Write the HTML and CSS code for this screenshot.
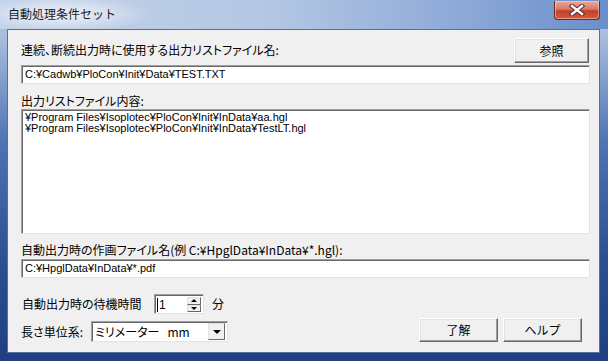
FILE: index.html
```html
<!DOCTYPE html>
<html>
<head lang="ja">
    <meta charset="UTF-8">
    <title>自動処理条件セット</title>
    <link rel="stylesheet" href="styles.css">
</head>
<body>
    <div class="window">
        <div class="titlebar">
            <span class="title">自動処理条件セット</span>
            <div class="close">
                <svg width="16" height="12" viewBox="0 0 16 12">
                    <path d="M3 2 L13 10 M13 2 L3 10" stroke="#5a2a22" stroke-width="4.4" stroke-linecap="square"/>
                    <path d="M3 2 L13 10 M13 2 L3 10" stroke="#fff" stroke-width="2.4" stroke-linecap="square"/>
                </svg>
            </div>
        </div>
        <div class="frame">
            <div class="client">
                <div class="row-top">
                    <span class="lbl lbl-main">連続、断続出力時に使用する出力リストファイル名:</span>
                    <button class="btn btn-browse">参照</button>
                </div>
                <div class="field">C:¥Cadwb¥PloCon¥Init¥Data¥TEST.TXT</div>
                <div class="lbl lbl-block">出力リストファイル内容:</div>
                <div class="field memo">
                    <div>¥Program Files¥Isoplotec¥PloCon¥Init¥InData¥aa.hgl</div>
                    <div>¥Program Files¥Isoplotec¥PloCon¥Init¥InData¥TestLT.hgl</div>
                </div>
                <div class="lbl lbl-block lbl-plot">自動出力時の作画ファイル名(例 C:¥HpglData¥InData¥*.hgl):</div>
                <div class="field">C:¥HpglData¥InData¥*.pdf</div>
                <div class="bottom">
                    <div class="settings">
                        <div class="set-row">
                            <span class="lbl lbl-wait">自動出力時の待機時間</span>
                            <div class="spin">
                                <div class="spin-edit"><span class="caret"></span>1</div>
                                <div class="spin-btns">
                                    <div class="spin-btn"><span class="tri-up"></span></div>
                                    <div class="spin-btn"><span class="tri-down"></span></div>
                                </div>
                            </div>
                            <span class="lbl lbl-min">分</span>
                        </div>
                        <div class="set-row set-unit">
                            <span class="lbl lbl-unit">長さ単位系:</span>
                            <div class="combo">
                                <span class="combo-text">ミリメーター&nbsp;&nbsp;&nbsp;mm</span>
                                <div class="combo-btn"><span class="tri-down"></span></div>
                            </div>
                        </div>
                    </div>
                    <div class="actions">
                        <button class="btn btn-act">了解</button>
                        <button class="btn btn-act">ヘルプ</button>
                    </div>
                </div>
            </div>
        </div>
    </div>
</body>
</html>
```

FILE: styles.css
```css
* {
    margin: 0;
    padding: 0;
    box-sizing: border-box;
}
html,body{
    width:608px;
    height:361px;
    overflow:hidden;
    background:#24468a;
}
.window{
    width:608px;
    height:361px;
    display:flex;
    flex-direction:column;
    background:linear-gradient(to bottom,#b9cae2 0,#a5bbdc 40px,#4f75b5 140px,#2c4f92 260px,#1f3f80 100%);
    font-family:"Noto Sans CJK JP","Liberation Sans",sans-serif;
    color:#000;
}
.titlebar{
    height:29px;
    display:flex;
    justify-content:space-between;
    align-items:flex-start;
    padding-left:8px;
    background:
        radial-gradient(ellipse 90px 18px at 62px 14px,rgba(255,255,255,.75),rgba(255,255,255,0)),
        linear-gradient(to right,#c3d2e8 0,#b3c7e4 45%,#8eaad8 75%,#6a8fcb 100%);
}
.title{
    font-size:12px;
    line-height:14px;
    padding-top:7px;
    color:#1a1a1a;
}
.close{
    width:46px;
    height:19px;
    margin:1px 8px 0 0;
    border:1px solid #6b2b22;
    border-top:none;
    border-radius:0 0 4px 4px;
    background:linear-gradient(to bottom,#e9a999 0,#d77a66 45%,#c2412a 55%,#d45a3f 100%);
    box-shadow:inset 0 0 0 1px rgba(255,220,210,.5);
    display:flex;
    align-items:center;
    justify-content:center;
}
.frame{
    flex:1;
    padding:0 8px 8px 7px;
    display:flex;
}
.client{
    flex:1;
    background:#f0f0f0;
    border:1px solid #55709c;
    padding:8px 9px 10px 13px;
    display:flex;
    flex-direction:column;
}
.lbl{
    font-size:12px;
    line-height:14px;
    font-feature-settings:"palt";
    white-space:nowrap;
}
.row-top{
    height:25px;
    display:flex;
    justify-content:space-between;
}
.lbl-main{
    align-self:flex-end;
    padding-bottom:6px;
}
.btn{
    font-family:"Noto Sans CJK JP","Liberation Sans",sans-serif;
    font-size:12px;
    line-height:14px;
    color:#000;
    background:#f0f0f0;
    border:1px solid;
    border-color:#fff #696969 #696969 #fff;
    box-shadow:inset -1px -1px 0 #a0a0a0,inset 1px 1px 0 #e3e3e3;
}
.btn-browse{
    width:75px;
    height:25px;
    margin-right:1px;
}
.field{
    height:19px;
    margin-top:2px;
    background:#fff;
    border:1px solid;
    border-color:#a0a0a0 #e3e3e3 #e3e3e3 #a0a0a0;
    box-shadow:inset 1px 1px 0 #696969;
    padding:0 3px;
    font-family:"Liberation Sans","Noto Sans CJK JP",sans-serif;
    font-size:11px;
    line-height:17px;
    white-space:nowrap;
}
.lbl-block{
    margin-top:10px;
}
.field.memo{
    height:125px;
    margin-top:1px;
    padding:2px 3px;
    font-size:11px;
    line-height:11px;
}
.lbl-plot{
    margin-top:9px;
}
.bottom{
    flex:1;
    display:flex;
    justify-content:space-between;
    align-items:flex-end;
}
.settings{
    display:flex;
    flex-direction:column;
}
.set-row{
    height:20px;
    display:flex;
    align-items:center;
}
.set-unit{
    height:21px;
    margin-top:7px;
}
.lbl-wait{
    width:133px;
    padding-left:1px;
}
.spin{
    width:50px;
    height:20px;
    display:flex;
    background:#fff;
    border:1px solid;
    border-color:#a0a0a0 #e3e3e3 #e3e3e3 #a0a0a0;
    box-shadow:inset 1px 1px 0 #696969;
    padding:2px 2px 1px 2px;
}
.spin-edit{
    flex:1;
    display:flex;
    align-items:center;
    font-family:"Liberation Sans",sans-serif;
    font-size:12px;
}
.caret{
    width:1px;
    height:14px;
    background:#000;
    margin-right:1px;
}
.spin-btns{
    width:14px;
    display:flex;
    flex-direction:column;
}
.spin-btn{
    flex:1;
    background:#f0f0f0;
    border:1px solid;
    border-color:#e3e3e3 #696969 #696969 #e3e3e3;
    display:flex;
    align-items:center;
    justify-content:center;
}
.tri-up{
    width:0;
    height:0;
    border-left:3px solid transparent;
    border-right:3px solid transparent;
    border-bottom:3px solid #000;
}
.tri-down{
    width:0;
    height:0;
    border-left:3px solid transparent;
    border-right:3px solid transparent;
    border-top:3px solid #000;
}
.lbl-min{
    margin-left:8px;
}
.lbl-unit{
    width:70px;
}
.combo{
    width:137px;
    height:21px;
    display:flex;
    align-items:center;
    background:#fff;
    border:1px solid;
    border-color:#a0a0a0 #e3e3e3 #e3e3e3 #a0a0a0;
    box-shadow:inset 1px 1px 0 #696969;
    padding:2px;
}
.combo-text{
    flex:1;
    font-size:12px;
    line-height:14px;
    font-feature-settings:"palt";
    white-space:nowrap;
    padding-left:1px;
}
.combo-btn{
    width:17px;
    height:17px;
    background:#f0f0f0;
    border:1px solid;
    border-color:#e3e3e3 #696969 #696969 #e3e3e3;
    display:flex;
    align-items:center;
    justify-content:center;
}
.combo-btn .tri-down{
    border-left-width:4px;
    border-right-width:4px;
    border-top-width:4px;
}
.actions{
    display:flex;
    gap:5px;
    margin-right:8px;
}
.btn-act{
    width:79px;
    height:24px;
}
```
